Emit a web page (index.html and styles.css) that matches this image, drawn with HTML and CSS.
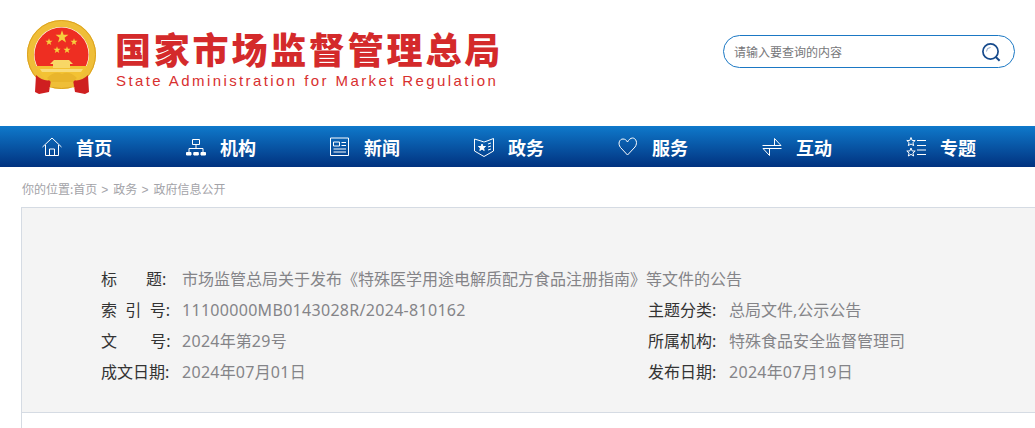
FILE: index.html
```html
<!DOCTYPE html>
<html lang="zh-CN">
<head>
    <meta charset="UTF-8">
    <meta name="viewport" content="width=device-width, initial-scale=1.0">
    <title>国家市场监督管理总局</title>
    <link rel="stylesheet" href="styles.css">
</head>
<body>
    <header class="top">
        <a class="logo" href="#">
            <svg class="emblem" viewBox="0 0 70 75" width="70" height="75">
                <defs>
                    <path id="star" d="M0 -5 L1.18 -1.62 H4.76 L1.9 .62 L2.94 4.05 L0 2 L-2.94 4.05 L-1.9 .62 L-4.76 -1.62 H-1.18 Z" fill="#f6cf3d"/>
                </defs>
                <circle cx="34.5" cy="34.5" r="31" fill="none" stroke="#efbe38" stroke-width="7"/>
                <circle cx="34.5" cy="34.5" r="34" fill="none" stroke="#dca21f" stroke-width="1"/>
                <circle cx="34.5" cy="34.5" r="27" fill="#ee2e22"/>
                <path d="M9 46 L60 46 Q57 54 50 60 H19 Q12 54 9 46 Z" fill="#f3c233"/>
                <path d="M13 49 H56 L54 52 H15 Z" fill="#f9dc7a"/>
                <path d="M27 40 H42 L46 44 H43 V48 H26 V44 H23 Z" fill="#f8d766"/>
                <path d="M9 55 Q16 62 24 60 L22 72 L12 74 L8 72 Z" fill="#cf1f20"/>
                <path d="M61 55 Q54 62 46 60 L48 72 L58 74 L62 72 Z" fill="#cf1f20"/>
                <path d="M20 58 Q28 50 35 54 Q42 50 50 58 L46 62 H24 Z" fill="#e9b52c"/>
                <path d="M22 68 Q28 60 35 63 Q42 60 48 68 Q42 65 35 67 Q28 65 22 68 Z" fill="#efbe38"/>
                <use href="#star" transform="translate(35 17) scale(1.35)"/>
                <use href="#star" transform="translate(22 22) scale(.75)"/>
                <use href="#star" transform="translate(47 22) scale(.75)"/>
                <use href="#star" transform="translate(30 30) scale(.75)"/>
                <use href="#star" transform="translate(40 30) scale(.75)"/>
            </svg>
            <div class="logo-text">
                <div class="logo-cn">国家市场监督管理总局</div>
                <div class="logo-en">State Administration for Market Regulation</div>
            </div>
        </a>
        <div class="search">
            <span class="search-tip">请输入要查询的内容</span>
            <svg class="search-icon" viewBox="0 0 20 20" width="20" height="20">
                <circle cx="9.5" cy="9.5" r="7.6" fill="none" stroke="#164a8c" stroke-width="1.7"/>
                <path d="M14.8 15 L18.6 18.8" stroke="#164a8c" stroke-width="2" fill="none"/>
                <path d="M5.5 9.5 A4 4 0 0 1 9.5 5.5" stroke="#8aa5c8" stroke-width="1" fill="none"/>
            </svg>
        </div>
    </header>

    <nav class="nav">
        <a class="nav-item" href="#">
            <svg class="nav-icon" viewBox="0 0 20 20"><path d="M.5 10 L10 1 L19.5 10 M3.5 8 V18.5 H16.5 V8 M7.5 18.5 V12 H12.5 V18.5"/></svg>
            首页
        </a>
        <a class="nav-item" href="#">
            <svg class="nav-icon" viewBox="0 0 20 20"><path d="M6.5 2.5 H13.5 V7.5 H6.5 Z M10 7.5 V11.5 M3 15 V11.5 H17 V15"/><path class="solid" d="M.5 15.5 H5 V18 H.5 Z M7.8 15.5 H12.3 V18 H7.8 Z M15 15.5 H19.5 V18 H15 Z"/></svg>
            机构
        </a>
        <a class="nav-item" href="#">
            <svg class="nav-icon" viewBox="0 0 20 20"><path d="M.5 1 H18.5 V18.5 H.5 Z M3.5 5 H9.5 V9 H3.5 Z M11.5 5.5 H16 M11.5 8.5 H16 M3.5 12 H16 M3.5 15 H16"/></svg>
            新闻
        </a>
        <a class="nav-item" href="#">
            <svg class="nav-icon" viewBox="0 0 20 20"><path d="M.5 2 L7 4 Q10 5 10 5 Q10 5 13 4 L19.5 1.5 V14 L10 19.5 L.5 14 Z M14 7 L17 6 M14 10 L17 9 M14 13 L17 12"/><path class="solid" d="M8 7 L9 9.5 H11.5 L9.5 11 L10.2 13.5 L8 12 L5.8 13.5 L6.5 11 L4.5 9.5 H7 Z"/></svg>
            政务
        </a>
        <a class="nav-item" href="#">
            <svg class="nav-icon" viewBox="0 0 20 20"><path d="M9.5 18 L2.5 10.5 C-.5 6.5 1.5 2 5 2 C7 2 8.5 3.2 9.5 5 C10.500 3 12.500 1 14.500 1 C18 1 20 6 17 10 Z"/></svg>
            服务
        </a>
        <a class="nav-item" href="#">
            <svg class="nav-icon" viewBox="0 0 20 20"><path d="M.5 8.5 H19 L12.5 1.5 V8.5 M19.5 11.5 H1 L7.5 18.5 V11.5"/></svg>
            互动
        </a>
        <a class="nav-item" href="#">
            <svg class="nav-icon" viewBox="0 0 20 20"><path d="M5 .5 L6.2 3.5 H9.2 L6.9 5.6 L7.7 8.6 L5 7 L2.3 8.6 L3.1 5.6 L.8 3.5 H3.8 Z M5 11 L6.2 14 H9.2 L6.9 16.1 L7.7 19 L5 17.4 L2.3 19 L3.1 16.1 L.8 14 H3.8 Z M11 3.5 H20 M11 8.5 H20 M11 13 H20 M11 17.5 H20"/></svg>
            专题
        </a>
    </nav>

    <div class="crumbs">你的位置:首页<i>&gt;</i>政务<i>&gt;</i>政府信息公开</div>

    <div class="content">
        <section class="info">
            <div class="info-row">
                <div class="field wide"><span class="label">标&nbsp;&nbsp;&nbsp;&nbsp;&nbsp;&nbsp;&nbsp;题:</span><span class="value">市场监管总局关于发布《特殊医学用途电解质配方食品注册指南》等文件的公告</span></div>
            </div>
            <div class="info-row">
                <div class="field"><span class="label">索&nbsp;&nbsp;引&nbsp;&nbsp;号:</span><span class="value"><span class="num">11100000MB0143028R/2024-810162</span></span></div>
                <div class="field"><span class="label">主题分类:</span><span class="value">总局文件,公示公告</span></div>
            </div>
            <div class="info-row">
                <div class="field"><span class="label">文&nbsp;&nbsp;&nbsp;&nbsp;&nbsp;&nbsp;&nbsp;&nbsp;号:</span><span class="value"><span class="num">2024</span>年第<span class="num">29</span>号</span></div>
                <div class="field"><span class="label">所属机构:</span><span class="value">特殊食品安全监督管理司</span></div>
            </div>
            <div class="info-row">
                <div class="field"><span class="label">成文日期:</span><span class="value"><span class="num">2024</span>年<span class="num">07</span>月<span class="num">01</span>日</span></div>
                <div class="field"><span class="label">发布日期:</span><span class="value"><span class="num">2024</span>年<span class="num">07</span>月<span class="num">19</span>日</span></div>
            </div>
        </section>
    </div>
</body>
</html>
```

FILE: styles.css
```css
html, body {
    height: 428px;
    overflow: hidden;
}
body {
    margin: 0;
    padding: 0;
    background-color: #fff;
    font-family: "Noto Sans CJK SC", "Liberation Sans", sans-serif;
}
a {
    text-decoration: none;
}
.top {
    height: 126px;
    box-sizing: border-box;
    padding: 20px 20px 0 27px;
    display: flex;
    justify-content: space-between;
    align-items: flex-start;
}
.logo {
    display: flex;
    gap: 18px;
}
.emblem {
    flex: none;
}
.logo-cn {
    margin-top: 4px;
    font-size: 36px;
    line-height: 48px;
    font-weight: 900;
    letter-spacing: 2.8px;
    color: #d42a2b;
    white-space: nowrap;
}
.logo-en {
    padding-left: 1px;
    font-family: "Liberation Sans", sans-serif;
    font-size: 15px;
    line-height: 18px;
    letter-spacing: 2.41px;
    color: #d8302f;
    white-space: nowrap;
}
.search {
    margin-top: 15px;
    width: 292px;
    height: 33px;
    box-sizing: border-box;
    border: 1px solid #1b78c4;
    border-radius: 17px;
    padding: 0 13px 0 10px;
    display: flex;
    justify-content: space-between;
    align-items: center;
}
.search-tip {
    font-size: 12px;
    color: #77777a;
}
.nav {
    height: 41px;
    padding-left: 42px;
    display: flex;
    background: linear-gradient(#0f79cb, #01327f);
}
.nav-item {
    width: 144px;
    flex: none;
    box-sizing: border-box;
    display: flex;
    align-items: center;
    gap: 14px;
    color: #fff;
    font-size: 18px;
    font-weight: 700;
}
.nav-item:last-child {
    width: auto;
}
.nav-icon {
    width: 20px;
    height: 20px;
    flex: none;
    fill: none;
    stroke: #fff;
    stroke-width: 1;
}
.nav-icon .solid {
    fill: #fff;
}
.crumbs {
    height: 40px;
    box-sizing: border-box;
    padding: 13px 0 0 22px;
    font-size: 12px;
    line-height: 18px;
    color: #a3a3a8;
}
.crumbs i {
    font-family: "Liberation Sans", sans-serif;
    font-style: normal;
    margin: 0 5px 0 4px;
}
.content {
    margin-left: 21px;
    height: 221px;
    border-left: 1px solid #d5dbe3;
}
.info {
    height: 206px;
    box-sizing: border-box;
    border-top: 1px solid #d5dbe3;
    border-bottom: 1px solid #d5dbe3;
    background-color: #f4f4f4;
    padding: 55px 0 0 79px;
}
.info-row {
    height: 31px;
    display: flex;
    align-items: center;
}
.field {
    width: 547px;
    flex: none;
    display: flex;
    font-family: "Noto Sans", "Noto Sans CJK SC", sans-serif;
    font-size: 16px;
    line-height: 24px;
    white-space: nowrap;
}
.field:last-child {
    width: auto;
}
.label {
    width: 81px;
    flex: none;
    color: #333;
}
.value {
    color: #848488;
}
.num {
    letter-spacing: .3px;
}
```
